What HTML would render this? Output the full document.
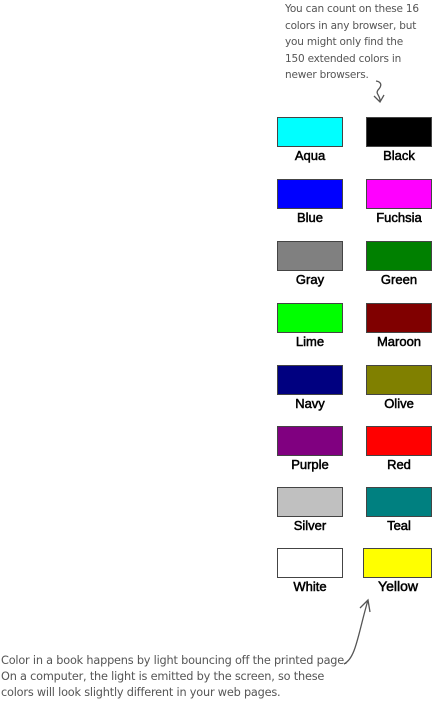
<!DOCTYPE html><html><head><style>
body{margin:0;width:433px;height:704px;background:#fff;position:relative;overflow:hidden;font-family:"Liberation Sans",sans-serif}
.s{position:absolute;width:64px;height:28px;border:1px solid #444}
.l{position:absolute;width:90px;text-align:center;font-size:13px;color:#000;-webkit-text-stroke:0.5px #000}
.h{position:absolute;font-family:"Comic Sans MS","DejaVu Sans",sans-serif;font-size:10.5px;color:#555;line-height:16.5px;white-space:nowrap;letter-spacing:-0.2px}
</style></head><body>
<div class="h" style="left:285px;top:1px">You can count on these 16<br>colors in any browser, but<br>you might only find the<br>150 extended colors in<br>newer browsers.</div>
<svg style="position:absolute;left:368px;top:78px" width="24" height="28"><path d="M8 3 C14 4 14 8 10 12 C7 16 13 18 12 24 M6 18 L12 24 L16 17" stroke="#555" stroke-width="1.3" fill="none"/></svg>

<div class="s" style="left:277px;top:117px;background:#0ff"></div><div class="l" style="left:265px;top:148px">Aqua</div>
<div class="s" style="left:366px;top:117px;background:#000"></div><div class="l" style="left:354px;top:148px">Black</div>
<div class="s" style="left:277px;top:179px;background:#00f"></div><div class="l" style="left:265px;top:210px">Blue</div>
<div class="s" style="left:366px;top:179px;background:#f0f"></div><div class="l" style="left:354px;top:210px">Fuchsia</div>
<div class="s" style="left:277px;top:241px;background:#808080"></div><div class="l" style="left:265px;top:272px">Gray</div>
<div class="s" style="left:366px;top:241px;background:#008000"></div><div class="l" style="left:354px;top:272px">Green</div>
<div class="s" style="left:277px;top:303px;background:#0f0"></div><div class="l" style="left:265px;top:334px">Lime</div>
<div class="s" style="left:366px;top:303px;background:#800000"></div><div class="l" style="left:354px;top:334px">Maroon</div>
<div class="s" style="left:277px;top:365px;background:#000080"></div><div class="l" style="left:265px;top:396px">Navy</div>
<div class="s" style="left:366px;top:365px;background:#808000"></div><div class="l" style="left:354px;top:396px">Olive</div>
<div class="s" style="left:277px;top:426px;background:#800080"></div><div class="l" style="left:265px;top:457px">Purple</div>
<div class="s" style="left:366px;top:426px;background:#f00"></div><div class="l" style="left:354px;top:457px">Red</div>
<div class="s" style="left:277px;top:487px;background:#c0c0c0"></div><div class="l" style="left:265px;top:518px">Silver</div>
<div class="s" style="left:366px;top:487px;background:#008080"></div><div class="l" style="left:354px;top:518px">Teal</div>
<div class="s" style="left:277px;top:548px;background:#fff"></div><div class="l" style="left:265px;top:579px">White</div>
<div class="s" style="left:363px;top:548px;width:67px;background:#ff0"></div><div class="l" style="left:353px;top:578px;font-size:14px">Yellow</div>

<svg style="position:absolute;left:330px;top:594px" width="50" height="90"><path d="M14 70 C26 64 28 40 38 6 M30 14 L38 6 L40 18" stroke="#555" stroke-width="1.3" fill="none"/></svg>
<div class="h" style="left:1px;top:653px;line-height:16px;font-size:11.3px">Color in a book happens by light bouncing off the printed page.<br>On a computer, the light is emitted by the screen, so these<br>colors will look slightly different in your web pages.</div>
</body></html>
